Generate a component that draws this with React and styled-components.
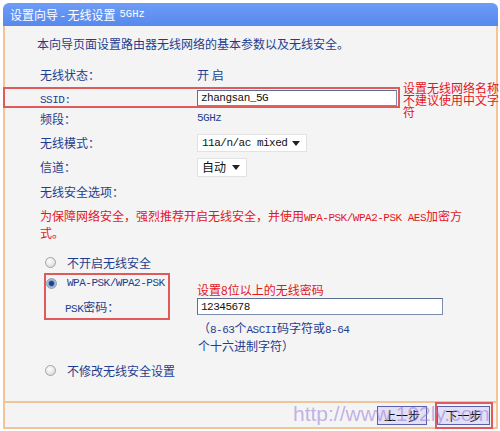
import React from 'react';
import styled, { createGlobalStyle, css } from 'styled-components';

const CJK = `"Noto Sans CJK SC", "Noto Sans", sans-serif`;
const MONO = `"Liberation Mono", "Noto Sans CJK SC", monospace`;
const BLUE = '#1f3d8e';
const RED = '#e3161d';
const BOXRED = '#e05a5c';
const TAN = '#f1c597';

const Global = createGlobalStyle`
  *, *::before, *::after { box-sizing: border-box; }
  html, body { margin: 0; padding: 0; background: #fff; }
  body {
    font-family: ${CJK};
    font-size: 12px;
    color: ${BLUE};
    width: 500px;
    height: 431px;
    overflow: hidden;
  }
`;

const Frame = styled.div`
  margin: 3px 0 0 3px;
  width: 495px;
`;

const TitleBar = styled.div`
  height: 23px;
  border-radius: 6px 6px 0 0;
  background: linear-gradient(#6e9df6, #5688ee);
  color: #fff;
  display: flex;
  align-items: center;
  padding-left: 7px;
  font-size: 12px;
  line-height: 23px;
`;

const Small = styled.span`
  font-family: ${MONO};
  font-size: 10.5px;
  line-height: 1;
  margin-left: 4px;
`;

const Panel = styled.div`
  height: 377px;
  padding-top: 9px;
  background: #f4f4f4;
  border: 2px solid ${TAN};
  border-top: none;
`;

const Intro = styled.div`
  padding-left: 32px;
  line-height: 18px;
`;

const Row = styled.div`
  display: flex;
  align-items: center;
  height: ${(p) => p.$h}px;
  margin-top: ${(p) => p.$mt || 0}px;
  padding-left: 35px;
  line-height: 16px;
`;

const Label = styled.div`
  width: 157px;
  flex: none;
`;

const Mono = styled.span`
  font-family: ${MONO};
  font-size: 11px;
  letter-spacing: -0.5px;
  line-height: 1;
`;

const SsidWrap = styled.div`
  display: flex;
  align-items: flex-start;
  height: 21px;
  margin-left: -2px;
`;

const SsidBox = styled.div`
  width: 397px;
  height: 21px;
  flex: none;
  border: 2px solid ${BOXRED};
  display: flex;
  align-items: center;
  padding-left: 35px;
`;

const Note = styled.div`
  color: ${RED};
  font-size: 12px;
  line-height: ${(p) => p.$lh || 16}px;
  white-space: nowrap;
  margin: ${(p) => p.$m || 0};
`;

const TextInput = styled.input`
  width: ${(p) => p.$w}px;
  height: ${(p) => p.$hh || 16}px;
  border: 1px solid #7d8cae;
  border-top-color: #5f6f94;
  border-left-color: #5f6f94;
  background: #fff;
  font-family: ${MONO};
  font-size: 11px;
  letter-spacing: -0.5px;
  color: #111;
  padding: 0 3px;
  outline: none;
  margin: 0;
`;

const Select = styled.div`
  width: ${(p) => p.$w}px;
  height: ${(p) => p.$hh || 18}px;
  background: #fff;
  border: 1px solid #e2e2e2;
  display: flex;
  align-items: center;
  justify-content: space-between;
  padding: 0 6px 0 4px;
  color: #111;
  font-family: ${(p) => (p.$cjk ? CJK : MONO)};
  font-size: ${(p) => (p.$cjk ? 12 : 11)}px;
  letter-spacing: ${(p) => (p.$cjk ? 0 : -0.5)}px;
`;

const Arrow = () => (
  <svg width="8" height="5" viewBox="0 0 8 5">
    <path d="M0 0 L8 0 L4 5 Z" fill="#222" />
  </svg>
);

const Warn = styled.div`
  padding-left: 35px;
  color: ${RED};
  line-height: 17px;
`;

const RadioRow = styled.div`
  display: flex;
  align-items: center;
  gap: 11px;
  height: 22px;
  padding-left: 40px;
  margin-top: ${(p) => p.$mt || 0}px;
`;

const Radio = styled.span`
  width: 11px;
  height: 11px;
  flex: none;
  border-radius: 50%;
  border: 1px solid #a3a3a3;
  background: radial-gradient(circle at 40% 35%, #ffffff 0, #f0f0f0 35%, #cfcfcf 100%);
  ${(p) =>
    p.$checked &&
    css`
      border-color: #8e9bb3;
      background: radial-gradient(circle at 50% 50%, #17386f 0, #2a4f8c 2.2px, #8eaad4 3.2px, #eef2f8 100%);
    `}
`;

const Section = styled.div`
  display: flex;
  align-items: flex-start;
`;

const SecBox = styled.div`
  margin-left: 39px;
  width: 126px;
  height: 47px;
  flex: none;
  border: 2px solid ${BOXRED};
  display: flex;
  flex-direction: column;
  gap: 6px;
`;

const BoxLine = styled.div`
  display: flex;
  align-items: center;
  gap: 10px;
  height: 17px;
  padding-left: ${(p) => p.$pl || 0}px;
`;

const RightCol = styled.div`
  margin-left: 27px;
  margin-top: 9px;
  display: flex;
  flex-direction: column;
`;

const Help = styled.div`
  margin-top: 4px;
  line-height: 18px;
  padding-left: 1px;
`;

const Footer = styled.div`
  position: relative;
  height: 26px;
  background: #f4f4f4;
  border: 2px solid ${TAN};
  border-top: none;
  display: flex;
  align-items: center;
  justify-content: flex-end;
  gap: 8px;
  padding-right: 3px;
`;

const Button = styled.div`
  width: ${(p) => p.$w}px;
  height: 19px;
  border: 1px solid #5b5fae;
  background: #e2e0f3;
  color: #111;
  font-size: 12px;
  display: flex;
  align-items: center;
  justify-content: center;
  line-height: 17px;
`;

const NextWrap = styled.div`
  border: 2px solid ${BOXRED};
  padding: 2px 1px 2px 0;
  flex: none;
`;

const Watermark = styled.div`
  position: absolute;
  left: 288px;
  top: 0;
  font-family: "Liberation Sans", Arial, sans-serif;
  font-size: 21px;
  line-height: 21px;
  color: rgba(150, 120, 215, 0.55);
  white-space: nowrap;
  pointer-events: none;
`;

export default function App() {
  return (
    <>
      <Global />
      <Frame>
        <TitleBar>
          设置向导 - 无线设置<Small>5GHz</Small>
        </TitleBar>
        <Panel>
          <Intro>本向导页面设置路由器无线网络的基本参数以及无线安全。</Intro>
          <Row $h={24} $mt={10}>
            <Label>无线状态：</Label>
            <div>开 启</div>
          </Row>
          <SsidWrap>
            <SsidBox>
              <Label>
                <Mono>SSID:</Mono>
              </Label>
              <TextInput $w={200} defaultValue="zhangsan_5G" />
            </SsidBox>
            <Note $lh={12} $m="-5px 0 0 3px">
              设置无线网络名称
              <br />
              不建议使用中文字
              <br />符
            </Note>
          </SsidWrap>
          <Row $h={21}>
            <Label>频段：</Label>
            <Mono>5GHz</Mono>
          </Row>
          <Row $h={28}>
            <Label>无线模式：</Label>
            <Select $w={110}>
              <span>11a/n/ac mixed</span>
              <Arrow />
            </Select>
          </Row>
          <Row $h={20}>
            <Label>信道：</Label>
            <Select $w={50} $hh={19} $cjk>
              <span>自动</span>
              <Arrow />
            </Select>
          </Row>
          <Row $h={30}>
            <Label>无线安全选项：</Label>
          </Row>
          <Warn>
            为保障网络安全，强烈推荐开启无线安全，并使用<Mono>WPA-PSK/WPA2-PSK AES</Mono>加密方
            <br />
            式。
          </Warn>
          <RadioRow $mt={10}>
            <Radio />
            <span>不开启无线安全</span>
          </RadioRow>
          <Section>
            <SecBox>
              <BoxLine>
                <Radio $checked />
                <Mono>WPA-PSK/WPA2-PSK</Mono>
              </BoxLine>
              <BoxLine $pl={19}>
                <span>
                  <Mono>PSK</Mono>密码：
                </span>
              </BoxLine>
            </SecBox>
            <RightCol>
              <Note $lh={16}>设置8位以上的无线密码</Note>
              <TextInput $w={246} $hh={17} defaultValue="12345678" />
              <Help>
                （<Mono>8-63</Mono>个<Mono>ASCII</Mono>码字符或<Mono>8-64</Mono>
                <br />
                个十六进制字符）
              </Help>
            </RightCol>
          </Section>
          <RadioRow $mt={4}>
            <Radio />
            <span>不修改无线安全设置</span>
          </RadioRow>
        </Panel>
        <Footer>
          <Button $w={50}>上一步</Button>
          <NextWrap>
            <Button $w={53}>下一步</Button>
          </NextWrap>
          <Watermark>http://www.192ly.com</Watermark>
        </Footer>
      </Frame>
    </>
  );
}
